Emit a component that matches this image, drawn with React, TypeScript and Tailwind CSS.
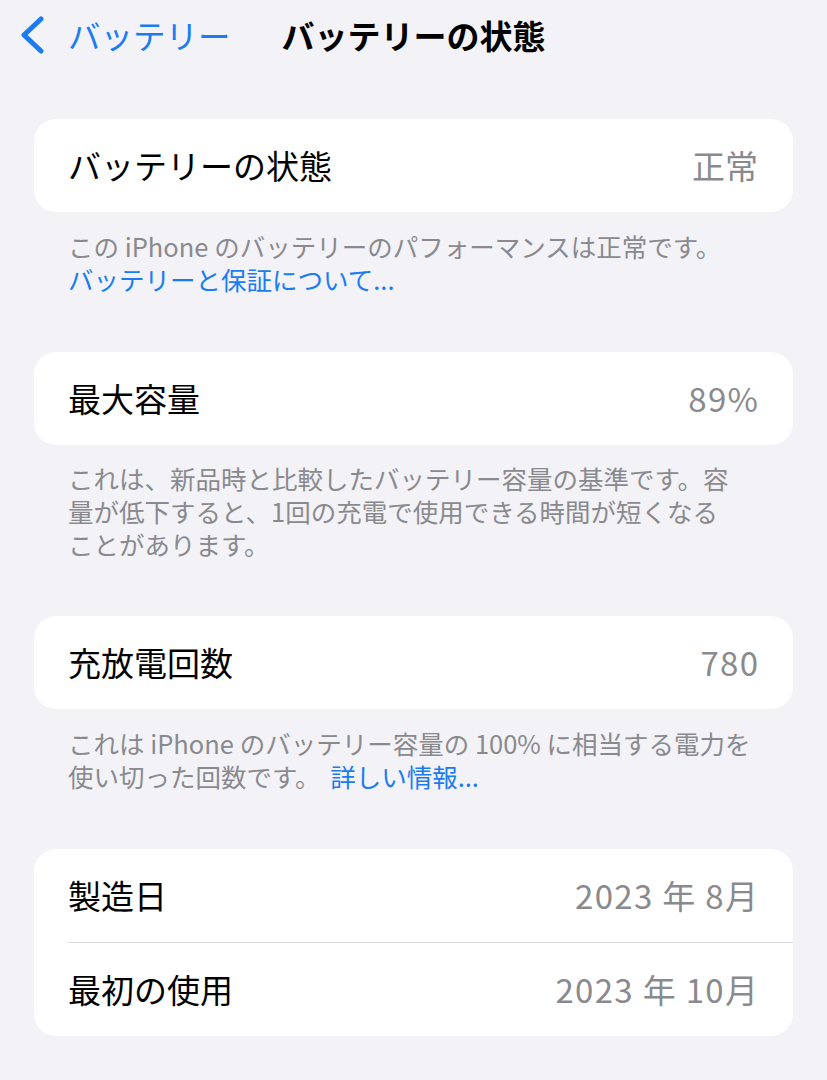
import React from 'react';

const font = { fontFamily: '"Noto Sans CJK JP", "Noto Sans", sans-serif' };

interface RowProps {
  label: string;
  value: string;
  numeric?: boolean;
}

const Row: React.FC<RowProps> = ({ label, value, numeric }) => (
  <div className="h-[93px] flex items-center justify-between pl-[34px] pr-[35px]">
    <span className="text-[33px] text-black leading-none">{label}</span>
    <span
      className={`text-[33px] text-[#8a8a8e] leading-none whitespace-pre ${numeric ? 'tracking-[0.04em] -mr-[0.04em]' : ''}`}
    >
      {value}
    </span>
  </div>
);

const Card: React.FC<{ children: React.ReactNode }> = ({ children }) => (
  <div className="mx-[34px] bg-white rounded-[22px] overflow-hidden">{children}</div>
);

const Footer: React.FC<{ children: React.ReactNode; className?: string }> = ({ children, className }) => (
  <p className={`px-[68px] text-[25.5px] leading-[33px] text-[#8a8a8e] whitespace-nowrap ${className ?? ''}`}>
    {children}
  </p>
);

export default function App() {
  return (
    <div className="min-h-screen w-full bg-[#f2f2f7]" style={font}>
      <header className="h-[70px] grid grid-cols-[1fr_auto_1fr] items-center">
        <div className="flex items-center pl-[20px] gap-[24px]">
          <svg width="24" height="38" viewBox="0 0 24 38" fill="none" stroke="#1a7cf0" strokeWidth="5" strokeLinecap="round" strokeLinejoin="round">
            <polyline points="21,3 4,19 21,35" />
          </svg>
          <span className="text-[32.5px] text-[#1a7cf0] leading-none">バッテリー</span>
        </div>
        <h1 className="text-[33px] font-bold text-black leading-none">バッテリーの状態</h1>
        <div />
      </header>

      <div className="pt-[49px]">
        <Card>
          <Row label="バッテリーの状態" value="正常" />
        </Card>
        <Footer className="pt-[17px] pb-[57px]">
          この iPhone のバッテリーのパフォーマンスは正常です。
          <br />
          <span className="text-[#1a7cf0]">バッテリーと保証について...</span>
        </Footer>

        <Card>
          <Row label="最大容量" value="89%" numeric />
        </Card>
        <Footer className="pt-[16px] pb-[56px]">
          これは、新品時と比較したバッテリー容量の基準です。容
          <br />
          量が低下すると、1回の充電で使用できる時間が短くなる
          <br />
          ことがあります。
        </Footer>

        <Card>
          <Row label="充放電回数" value="780" numeric />
        </Card>
        <Footer className="pt-[17px] pb-[57px]">
          これは iPhone のバッテリー容量の 100% に相当する電力を
          <br />
          使い切った回数です。 <span className="ml-[4px] text-[#1a7cf0]">詳しい情報...</span>
        </Footer>

        <Card>
          <Row label="製造日" value="2023 年 8月" numeric />
          <div className="ml-[34px] h-px bg-[#d8d8dc]" />
          <Row label="最初の使用" value="2023 年 10月" numeric />
        </Card>
      </div>
    </div>
  );
}
